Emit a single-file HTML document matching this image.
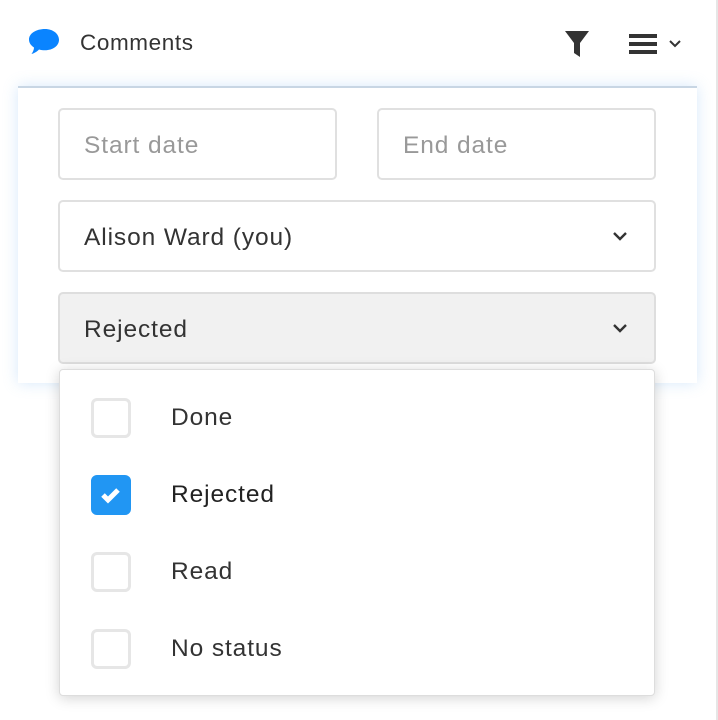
<!DOCTYPE html>
<html><head><meta charset="utf-8"><style>
html,body{margin:0;padding:0;background:#fff;width:718px;height:720px;overflow:hidden;font-family:"Liberation Sans",sans-serif;color:#333;position:relative}
.edge{position:absolute;left:716px;top:0;width:2px;height:720px;background:#e6e6e6}
.title{position:absolute;left:80px;top:30px;font-size:22.5px;letter-spacing:0.6px;color:#333}
.panel{position:absolute;left:18px;top:86px;width:679px;height:297px;background:#fff;border-top:2px solid #c8d6e4;box-shadow:0 0 14px rgba(120,180,240,.3);box-sizing:border-box}
.field{position:absolute;border:2px solid #e0e0e0;border-radius:5px;box-sizing:border-box;font-size:24.5px;letter-spacing:0.9px;padding-left:24px;padding-top:4px;display:flex;align-items:center}
.ph{color:#999}
.chev{position:absolute;right:26px;top:50%;margin-top:-5px}
.menu{position:absolute;left:59px;top:369px;width:596px;height:327px;background:#fff;border:1px solid #ddd;border-radius:4px;box-shadow:0 2px 14px rgba(0,0,0,.18);box-sizing:border-box}
.item{position:absolute;left:0;height:40px;font-size:24.5px;letter-spacing:0.9px;display:flex;align-items:center}
.cb{position:absolute;left:31px;width:40px;height:40px;border:3px solid #e6e6e6;border-radius:6px;box-sizing:border-box}
.cb.on{background:#2196f3;border-color:#2196f3}
.lbl{position:absolute;left:111px;white-space:nowrap}
</style></head><body>
<div class="edge"></div>
<svg style="position:absolute;left:27px;top:28px" width="34" height="28" viewBox="0 0 34 28"><path d="M18 1C9 1 2 5.5 2 11.5c0 3.5 2 6 5 8 0 2.5-1.5 5-2.5 6.5 3.5-1 6-3 7.5-4.5 2 .6 4 .8 6 .8 8 0 14-4.5 14-10.5S26 1 18 1z" fill="#0a84ff"/></svg>
<div class="title">Comments</div>
<svg style="position:absolute;left:564px;top:30px" width="26" height="28" viewBox="0 0 26 28"><path d="M1 1h24l-9 12v14l-6-4V13z" fill="#333"/></svg>
<svg style="position:absolute;left:629px;top:34px" width="30" height="20" viewBox="0 0 30 20"><rect x="0" y="0" width="28" height="4" fill="#333"/><rect x="0" y="8" width="28" height="4" fill="#333"/><rect x="0" y="16" width="28" height="4" fill="#333"/></svg>
<svg style="position:absolute;left:668px;top:39px" width="14" height="10" viewBox="0 0 14 10"><path d="M2 2l5 5 5-5" stroke="#333" stroke-width="2" fill="none"/></svg>
<div class="panel"></div>
<div class="field" style="left:58px;top:108px;width:279px;height:72px"><span class="ph">Start date</span></div>
<div class="field" style="left:377px;top:108px;width:279px;height:72px"><span class="ph">End date</span></div>
<div class="field" style="left:58px;top:200px;width:598px;height:72px">Alison Ward (you)<svg class="chev" width="16" height="10" viewBox="0 0 16 10"><path d="M2 2l6 6 6-6" stroke="#333" stroke-width="2.4" fill="none"/></svg></div>
<div class="field" style="left:58px;top:292px;width:598px;height:72px;background:#f1f1f1;border-color:#dedede">Rejected<svg class="chev" width="16" height="10" viewBox="0 0 16 10"><path d="M2 2l6 6 6-6" stroke="#333" stroke-width="2.4" fill="none"/></svg></div>
<div class="menu">
 <div class="item" style="top:28px"><div class="cb"></div><span class="lbl">Done</span></div>
 <div class="item" style="top:105px"><div class="cb on"><svg width="34" height="34" viewBox="0 0 34 34"><path d="M9 17l5 5 10-10" stroke="#fff" stroke-width="5" fill="none"/></svg></div><span class="lbl" style="color:#222">Rejected</span></div>
 <div class="item" style="top:182px"><div class="cb"></div><span class="lbl">Read</span></div>
 <div class="item" style="top:259px"><div class="cb"></div><span class="lbl">No status</span></div>
</div>
</body></html>
